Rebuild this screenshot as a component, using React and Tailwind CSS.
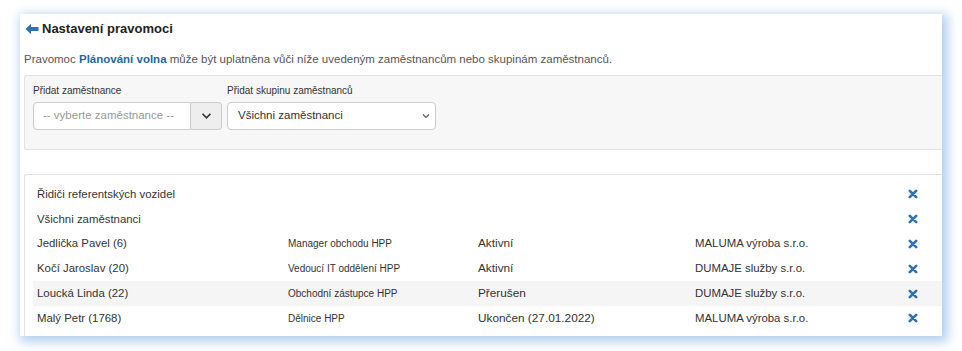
import React from "react";

const rows = [
  { name: "Řidiči referentských vozidel", pos: "", status: "", company: "" },
  { name: "Všichni zaměstnanci", pos: "", status: "", company: "" },
  { name: "Jedlička Pavel (6)", pos: "Manager obchodu HPP", status: "Aktivní", company: "MALUMA výroba s.r.o." },
  { name: "Kočí Jaroslav (20)", pos: "Vedoucí IT oddělení HPP", status: "Aktivní", company: "DUMAJE služby s.r.o." },
  { name: "Loucká Linda (22)", pos: "Obchodní zástupce HPP", status: "Přerušen", company: "DUMAJE služby s.r.o.", striped: true },
  { name: "Malý Petr (1768)", pos: "Dělnice HPP", status: "Ukončen (27.01.2022)", company: "MALUMA výroba s.r.o." },
];

function XIcon() {
  return (
    <svg width="10" height="10" viewBox="0 0 10 10">
      <path d="M1.8 1.8 L8.2 8.2 M8.2 1.8 L1.8 8.2" stroke="#2f72b3" strokeWidth="2.6" strokeLinecap="round" />
    </svg>
  );
}

function ArrowLeft() {
  return (
    <svg width="14" height="12" viewBox="0 0 14 12">
      <path d="M0.5 6 L6 0.8 L6 4 L13.5 4 L13.5 8 L6 8 L6 11.2 Z" fill="#2f72b3" />
    </svg>
  );
}

export default function App() {
  return (
    <div className="w-[962px] h-[351px] bg-white pt-[14px] pl-[20px] overflow-hidden" style={{ fontFamily: '"Liberation Sans", Arial, sans-serif' }}>
      <div className="w-[922px] h-[322px] bg-white shadow-[3px_3px_10px_3px_rgba(120,170,225,0.55)] overflow-hidden flex flex-col pl-[4px]">
        <div className="h-[24px] flex items-end gap-[3px] pl-[1px]">
          <span className="mb-[3px]"><ArrowLeft /></span>
          <span className="text-[13px] font-bold text-[#222] leading-[18px]">Nastavení pravomoci</span>
        </div>
        <div className="mt-[12px] text-[11.5px] text-[#555] leading-[18px] whitespace-nowrap">
          Pravomoc <span className="font-bold text-[#23699f]">Plánování volna</span> může být uplatněna vůči níže uvedeným zaměstnancům nebo skupinám zaměstnanců.
        </div>
        <div className="mt-[7px] h-[75px] bg-[#f7f7f7] border border-r-0 border-[#e3e3e3] rounded-l-[3px] pl-[8px] pt-[7px] flex gap-[5px]">
          <div className="flex flex-col">
            <label className="text-[10px] text-[#333] leading-[13px] h-[19px] pt-[1px] whitespace-nowrap">Přidat zaměstnance</label>
            <div className="flex h-[28px] w-[189px]">
              <div className="flex-1 bg-white border border-[#ccc] rounded-l-[4px] flex items-center pl-[9px] text-[11.5px] text-[#999] whitespace-nowrap">-- vyberte zaměstnance --</div>
              <div className="w-[31px] bg-[#eee] border border-l-0 border-[#ccc] rounded-r-[4px] flex items-center justify-center">
                <svg width="11" height="8" viewBox="0 0 11 8"><path d="M1.5 1.8 L5.5 5.8 L9.5 1.8" stroke="#333" strokeWidth="1.6" fill="none" /></svg>
              </div>
            </div>
          </div>
          <div className="flex flex-col">
            <label className="text-[10px] text-[#333] leading-[13px] h-[19px] pt-[1px] whitespace-nowrap">Přidat skupinu zaměstnanců</label>
            <div className="h-[28px] w-[209px] bg-white border border-[#ccc] rounded-[4px] flex items-center justify-between pl-[10px] pr-[5px] text-[11.5px] text-[#333]">
              <span>Všichni zaměstnanci</span>
              <svg width="8" height="6" viewBox="0 0 8 6"><path d="M1 1.5 L4 4.5 L7 1.5" stroke="#555" strokeWidth="1.1" fill="none" /></svg>
            </div>
          </div>
        </div>
        <div className="mt-[24px] flex-1 border-t border-l border-[#e3e3e3] rounded-tl-[3px] pt-[7px] pl-[8px]">
          {rows.map((r, i) => (
            <div key={i} className={`h-[24.8px] flex items-center text-[11.4px] text-[#333] whitespace-nowrap ${r.striped ? "bg-[#f5f5f5]" : ""}`}>
              <div className="w-[255px] pl-[4px]">{r.name}</div>
              <div className="w-[190px] text-[10px]">{r.pos}</div>
              <div className="w-[217px] text-[11.8px]">{r.status}</div>
              <div className="w-[213px]">{r.company}</div>
              <div className="w-[10px] flex items-center"><XIcon /></div>
            </div>
          ))}
        </div>
      </div>
    </div>
  );
}
